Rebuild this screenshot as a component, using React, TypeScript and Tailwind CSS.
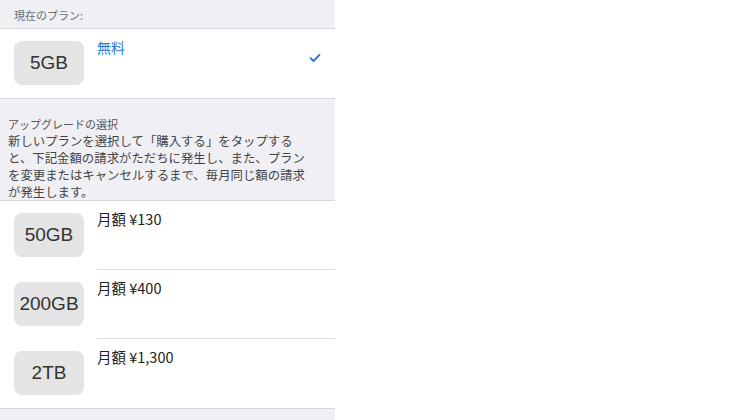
const FONT = { fontFamily: '"Noto Sans CJK JP", "Liberation Sans", sans-serif' };

const PLANS = [
  { size: "50GB", price: "月額 ¥130" },
  { size: "200GB", price: "月額 ¥400" },
  { size: "2TB", price: "月額 ¥1,300" },
];

function SizeBox({ label }: { label: string }) {
  return (
    <div
      className="w-[70px] h-[44px] rounded-[8px] bg-[#e4e4e4] grid place-items-center text-[19px] text-[#333] shrink-0"
      style={{ fontFamily: '"Liberation Sans", sans-serif' }}
    >
      {label}
    </div>
  );
}

export default function App() {
  return (
    <div className="w-[734px] h-[420px] bg-white flex" style={FONT}>
      <div className="w-[335px] h-full bg-[#efeff4] flex flex-col overflow-hidden">
        {/* current plan */}
        <div className="h-[29px] px-[14px] flex items-end pb-[5px] text-[11px] text-[#6d6d72] border-b border-[#d8d8dc]">
          現在のプラン:
        </div>
        <div className="h-[70px] bg-white flex border-b border-[#d8d8dc]">
          <div className="pl-[14px] pt-[12px]">
            <SizeBox label="5GB" />
          </div>
          <div className="flex-1 pl-[13px] pt-[9px] text-[14px] text-[#2f78d2] leading-[18px]">無料</div>
          <div className="pr-[14px] pt-[24px]">
            <svg width="12" height="10" viewBox="0 0 12 10" fill="none">
              <path d="M1.5 5.2 L4.5 8 L10.5 1.8" stroke="#2f6fd0" strokeWidth="1.8" strokeLinecap="round" strokeLinejoin="round" />
            </svg>
          </div>
        </div>

        {/* upgrade description */}
        <div className="h-[102px] px-[8px] pt-[17px] text-[#444] border-b border-[#d8d8dc]">
          <div className="text-[11px] leading-[16px] text-[#555]">アップグレードの選択</div>
          <div className="mt-[1px] w-[302px] text-[12.4px] leading-[17px]">
            新しいプランを選択して「購入する」をタップすると、下記金額の請求がただちに発生し、また、プランを変更またはキャンセルするまで、毎月同じ額の請求が発生します。
          </div>
        </div>

        {/* plans */}
        <div className="bg-white flex flex-col border-b border-[#d8d8dc]">
          {PLANS.map((p, i) => (
            <div key={p.size} className="h-[69px] flex">
              <div className="pl-[14px] pt-[12px]">
                <SizeBox label={p.size} />
              </div>
              <div
                className={`flex-1 ml-[13px] pt-[9px] text-[14.5px] leading-[18px] text-[#222] ${
                  i < PLANS.length - 1 ? "border-b border-[#dcdcdc]" : ""
                }`}
              >
                {p.price}
              </div>
            </div>
          ))}
        </div>
        <div className="flex-1" />
      </div>
      <div className="flex-1" />
    </div>
  );
}
